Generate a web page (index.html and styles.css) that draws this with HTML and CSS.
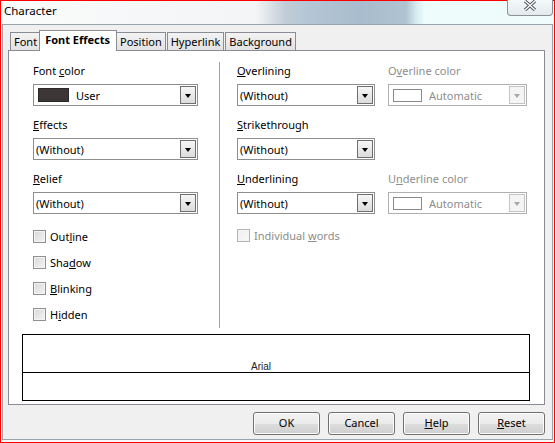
FILE: index.html
```html
<!DOCTYPE html>
<html lang="en">
<head>
    <meta charset="UTF-8">
    <title>Character</title>
    <link rel="stylesheet" href="styles.css">
</head>
<body>
    <div class="window">
        <div class="titlebar">
            <span class="title">Character</span>
            <div class="close">
                <svg width="14" height="11" viewBox="0 0 14 11">
                    <path d="M2 1 L12 10 M12 1 L2 10" stroke="#4a4f55" stroke-width="3.2" fill="none"/>
                    <path d="M2 1 L12 10 M12 1 L2 10" stroke="#ffffff" stroke-width="1.4" fill="none"/>
                </svg>
            </div>
        </div>

        <div class="client">
            <div class="tabs">
                <div class="tab">Font</div>
                <div class="tab active">Font Effects</div>
                <div class="tab">Position</div>
                <div class="tab">Hyperlink</div>
                <div class="tab">Background</div>
            </div>

            <div class="panel">
                <div class="cols">
                    <div class="col-left">
                        <div class="group">
                            <div class="label">Font <u>c</u>olor</div>
                            <div class="listbox">
                                <span class="swatch dark"></span>
                                <span class="value">User</span>
                                <span class="drop"><i></i></span>
                            </div>
                        </div>
                        <div class="group">
                            <div class="label"><u>E</u>ffects</div>
                            <div class="listbox">
                                <span class="value">(Without)</span>
                                <span class="drop"><i></i></span>
                            </div>
                        </div>
                        <div class="group">
                            <div class="label"><u>R</u>elief</div>
                            <div class="listbox">
                                <span class="value">(Without)</span>
                                <span class="drop"><i></i></span>
                            </div>
                        </div>
                        <div class="checks">
                            <div class="check"><span class="box"></span><span>Out<u>l</u>ine</span></div>
                            <div class="check"><span class="box"></span><span>Sha<u>d</u>ow</span></div>
                            <div class="check"><span class="box"></span><span><u>B</u>linking</span></div>
                            <div class="check"><span class="box"></span><span>H<u>i</u>dden</span></div>
                        </div>
                    </div>

                    <div class="sep"></div>

                    <div class="col-right">
                        <div class="group">
                            <div class="label"><u>O</u>verlining</div>
                            <div class="listbox">
                                <span class="value">(Without)</span>
                                <span class="drop"><i></i></span>
                            </div>
                        </div>
                        <div class="group disabled">
                            <div class="label">O<u>v</u>erline color</div>
                            <div class="listbox">
                                <span class="swatch light"></span>
                                <span class="value">Automatic</span>
                                <span class="drop"><i></i></span>
                            </div>
                        </div>
                        <div class="group">
                            <div class="label"><u>S</u>trikethrough</div>
                            <div class="listbox">
                                <span class="value">(Without)</span>
                                <span class="drop"><i></i></span>
                            </div>
                        </div>
                        <div class="group"></div>
                        <div class="group">
                            <div class="label"><u>U</u>nderlining</div>
                            <div class="listbox">
                                <span class="value">(Without)</span>
                                <span class="drop"><i></i></span>
                            </div>
                        </div>
                        <div class="group disabled">
                            <div class="label">U<u>n</u>derline color</div>
                            <div class="listbox">
                                <span class="swatch light"></span>
                                <span class="value">Automatic</span>
                                <span class="drop"><i></i></span>
                            </div>
                        </div>
                        <div class="check disabled wide"><span class="box"></span><span>Individual <u>w</u>ords</span></div>
                    </div>
                </div>

                <div class="preview">
                    <div class="preview-top"><span>Arial</span></div>
                </div>
            </div>

            <div class="buttons">
                <div class="btn">OK</div>
                <div class="btn">Cancel</div>
                <div class="btn"><u>H</u>elp</div>
                <div class="btn"><u>R</u>eset</div>
            </div>
        </div>
    </div>
</body>
</html>
```

FILE: styles.css
```css
body {
    margin: 0;
    font-family: "Noto Sans", sans-serif;
    font-size: 11px;
    color: #000;
}

.window {
    width: 555px;
    height: 443px;
    box-sizing: border-box;
    border: 1px solid #ff0000;
    display: flex;
    flex-direction: column;
    background: #f6f7f7;
}

/* barra de titulo tipo Aero */
.titlebar {
    position: relative;
    height: 23px;
    flex: none;
    background: linear-gradient(90deg, #fafbfb 0, #f3f5f6 255px, #d6dee4 272px, #c0ccd6 285px, #b5c7d6 305px, #a8bccd 360px, #b0c3d2 405px, #d8eef2 416px, #eefcfc 424px, #f0fbfb 100%);
}

.title {
    display: block;
    padding: 2px 0 0 3px;
    font-size: 11.5px;
}

.close {
    position: absolute;
    top: -1px;
    right: 1px;
    width: 44px;
    height: 15px;
    border: 1px solid #8a9197;
    border-top: none;
    border-radius: 0 0 4px 4px;
    background: linear-gradient(#f4f9f9, #e2eaec);
    display: flex;
    justify-content: center;
    align-items: flex-start;
}

.client {
    flex: 1;
    margin: 0 1px 2px 1px;
    border: 1px solid #9aa2aa;
    background: #f0f0f0;
    padding: 5px 0 0 5px;
}

/* pestañas */
.tabs {
    display: flex;
    align-items: flex-end;
    height: 20px;
    padding-left: 2px;
    position: relative;
    z-index: 1;
}

.tab {
    height: 18px;
    line-height: 17px;
    padding: 0 3px;
    border: 1px solid #898c95;
    border-bottom: none;
    margin-right: 1px;
    background: linear-gradient(#f3f3f3, #e2e2e2);
    box-sizing: border-box;
}

.tab:first-child {
    margin-right: 0;
}

.tab.active {
    height: 21px;
    margin: 0 -1px -1px -2px;
    padding: 0 6px 0 5px;
    line-height: 18px;
    background: #fff;
    font-weight: bold;
    position: relative;
    z-index: 2;
}

.panel {
    width: 537px;
    height: 355px;
    box-sizing: border-box;
    border: 1px solid #898c95;
    background: #fff;
    padding: 12px 0 0 13px;
}

.cols {
    display: flex;
    height: 265px;
    padding-left: 11px;
}

.col-left {
    width: 165px;
}

.sep {
    width: 1px;
    margin: -1px 17px 0 21px;
    background: #a0a0a0;
}

.col-right {
    display: grid;
    grid-template-columns: 138px 139px;
    grid-auto-rows: 54px;
    column-gap: 13px;
    align-content: start;
}

.group {
    height: 54px;
}

.label {
    height: 16px;
    line-height: 16px;
    margin-bottom: 5px;
}

.listbox {
    height: 22px;
    box-sizing: border-box;
    border: 1px solid #8e8e8e;
    display: flex;
    align-items: center;
    padding-left: 2px;
    background: #fff;
}

.value {
    flex: 1;
}

.swatch {
    width: 31px;
    height: 14px;
    box-sizing: border-box;
    margin: 0 7px 0 2px;
}

.swatch.dark {
    background: #3d3636;
    border: 1px solid #2c2828;
}

.swatch.light {
    width: 29px;
    height: 13px;
    background: #fff;
    border: 1px solid #8a8a8a;
}

.drop {
    width: 16px;
    height: 18px;
    box-sizing: border-box;
    margin-right: 1px;
    border: 1px solid #6f6f6f;
    background: linear-gradient(#f6f6f6, #dcdcdc);
    display: flex;
    justify-content: center;
    align-items: center;
}

.drop i {
    width: 0;
    height: 0;
    border-left: 3.5px solid transparent;
    border-right: 3.5px solid transparent;
    border-top: 4px solid #000;
    margin-top: 1px;
}

.disabled .label,
.disabled .value,
.check.disabled {
    color: #8d8d8d;
}

.disabled .listbox {
    border-color: #b0b0b0;
}

.disabled .drop {
    border-color: #c4c4c4;
    background: #f4f4f4;
}

.disabled .drop i {
    border-top-color: #a8a8a8;
}

.checks {
    margin-top: -2px;
}

.check {
    height: 26px;
    display: flex;
    align-items: center;
}

.check.wide {
    grid-column: 1 / 3;
    margin-top: -3px;
}

.box {
    width: 13px;
    height: 13px;
    box-sizing: border-box;
    border: 1px solid #8e8f8f;
    box-shadow: inset 0 0 0 1px #f4f4f4;
    background: linear-gradient(135deg, #d8d8d8, #f4f4f4);
    margin: 0 4px 0 0;
    flex: none;
}

.check.disabled .box {
    border-color: #b4b4b4;
    background: linear-gradient(135deg, #ececec, #fafafa);
}

/* vista previa */
.preview {
    width: 508px;
    height: 67px;
    box-sizing: border-box;
    border: 1px solid #000;
    margin-top: 6px;
}

.preview-top {
    height: 37px;
    border-bottom: 1px solid #000;
    display: flex;
    align-items: flex-end;
    justify-content: center;
    padding-right: 30px;
}

.preview-top span {
    font-family: "Liberation Sans", sans-serif;
    font-size: 10px;
    line-height: 10px;
    color: #222;
}

.buttons {
    display: flex;
    justify-content: flex-end;
    gap: 8px;
    width: 537px;
    margin-top: 7px;
}

.btn {
    width: 67px;
    height: 23px;
    box-sizing: border-box;
    border: 1px solid #707070;
    border-radius: 3px;
    background: linear-gradient(#f2f2f2 0%, #ebebeb 50%, #dddddd 51%, #cfcfcf 100%);
    box-shadow: inset 0 0 0 1px #fcfcfc;
    text-align: center;
    line-height: 20px;
}
```
